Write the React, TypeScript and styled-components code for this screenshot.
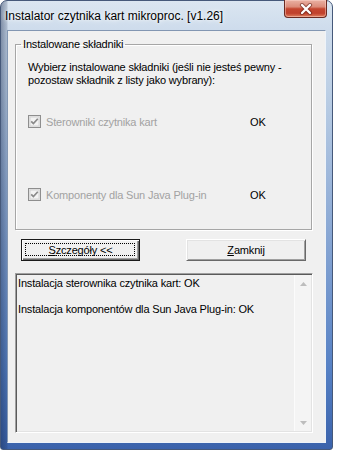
import React from "react";
import styled, { createGlobalStyle } from "styled-components";

const Global = createGlobalStyle`
  html, body { margin: 0; padding: 0; background: #ffffff; }
  body { font-family: "Liberation Sans", Arial, sans-serif; }
  * { box-sizing: border-box; }
`;

const Window = styled.div`
  width: 333px;
  height: 450px;
  display: flex;
  flex-direction: column;
  border: 1px solid #46597a;
  border-radius: 7px 7px 3px 3px;
  background:
    linear-gradient(90deg, rgba(20, 38, 75, 0.42) 0px, rgba(20, 38, 75, 0.18) 6px, rgba(0, 0, 0, 0) 7px),
    linear-gradient(180deg, #dbe6f1 0px, #cedcec 28px, #bccfe5 90px, #8aa8d4 230px, #5580c4 370px, #3a62ab 449px);
`;

const TitleBar = styled.div`
  height: 29px;
  display: flex;
  align-items: center;
  justify-content: space-between;
  padding-left: 4px;
  padding-right: 5px;
`;

const Title = styled.span`
  font-size: 12px;
  color: #000;
  white-space: nowrap;
  text-shadow: 0 0 6px rgba(255, 255, 255, 0.95), 0 0 3px rgba(255, 255, 255, 0.9);
`;

const CloseButton = styled.div`
  align-self: flex-start;
  width: 43px;
  height: 18px;
  margin-top: -1px;
  border: 1px solid #6a2a22;
  border-top: none;
  border-radius: 0 0 4px 4px;
  background: linear-gradient(180deg, #eab1a3 0%, #dc8c7a 40%, #c4462f 52%, #c0412d 78%, #e0805f 100%);
  box-shadow: inset 0 0 0 1px rgba(255, 220, 210, 0.45);
  display: flex;
  align-items: center;
  justify-content: center;
`;

const Client = styled.div`
  flex: 1;
  margin: 0 6px 6px 6px;
  border: 1px solid;
  border-color: #8296b2 #eef3f9 #eef3f9 #8296b2;
  background: #f0f0f0;
  display: flex;
  flex-direction: column;
  align-items: flex-start;
  font-size: 11px;
  letter-spacing: -0.17px;
  color: #000;
`;

const Group = styled.fieldset`
  margin: 7px 0 0 7px;
  padding: 0;
  width: 297px;
  height: 192px;
  min-width: 0;
  border: 1px solid #a6a6a6;
  box-shadow: inset 1px 1px 0 #ffffff, 1px 1px 0 #ffffff;
`;

const Legend = styled.legend`
  margin-left: 5px;
  padding: 0 2px;
  line-height: 13px;
  font-size: 11px;
`;

const GroupBody = styled.div`
  padding: 10px 0 0 12px;
`;

const Intro = styled.div`
  line-height: 13px;
`;

const Row = styled.div<{ $top: number }>`
  display: flex;
  align-items: center;
  height: 13px;
  margin-top: ${(p) => p.$top}px;
`;

const Label = styled.span`
  width: 209px;
  padding-left: 5px;
  color: #a2a2a2;
  white-space: nowrap;
`;

const Status = styled.span`
  color: #000;
`;

const ButtonRow = styled.div`
  display: flex;
  gap: 46px;
  margin: 9px 0 0 13px;
`;

const Button = styled.div<{ $default?: boolean }>`
  width: ${(p) => (p.$default ? 119 : 120)}px;
  height: 22px;
  display: flex;
  align-items: center;
  justify-content: center;
  position: relative;
  background: #f0f0f0;
  border: 1px solid;
  border-color: ${(p) => (p.$default ? "#1a1a1a" : "#ffffff #696969 #696969 #ffffff")};
  box-shadow: ${(p) =>
    p.$default
      ? "inset 1px 1px 0 #ffffff, inset -1px -1px 0 #696969, inset -2px -2px 0 #a0a0a0"
      : "inset 1px 1px 0 #e3e3e3, inset -1px -1px 0 #a0a0a0"};
  white-space: nowrap;
  u { text-decoration: underline; text-underline-offset: 1px; }
`;

const FocusRect = styled.span`
  position: absolute;
  inset: 3px 4px 4px 3px;
  border: 1px dotted #000;
  pointer-events: none;
`;

const LogBox = styled.div`
  margin: 12px 0 0 7px;
  width: 298px;
  height: 160px;
  display: flex;
  border: 1px solid;
  border-color: #a0a0a0 #ffffff #ffffff #a0a0a0;
  box-shadow: inset 1px 1px 0 #5a5a5a, inset -1px -1px 0 #e3e3e3;
  background: #f0f0f0;
`;

const LogText = styled.div`
  flex: 1;
  padding: 3px 0 0 2px;
  line-height: 13px;
`;

const LogLine = styled.div`
  margin-bottom: 13px;
  white-space: nowrap;
`;

const ScrollBar = styled.div`
  width: 17px;
  margin: 1px 1px 1px 0;
  display: flex;
  flex-direction: column;
  justify-content: space-between;
  background: #f4f4f4;
  border-left: 1px solid #fbfbfb;
`;

const ScrollArrow = styled.div`
  height: 17px;
  display: flex;
  align-items: center;
  justify-content: center;
`;

const Checkbox = () => (
  <svg width="13" height="13" viewBox="0 0 13 13">
    <rect x="0.5" y="0.5" width="12" height="12" fill="#e6e6e6" stroke="#8e8e8e" />
    <rect x="2" y="2" width="9" height="9" fill="#f3f3f3" stroke="#d4d4d4" strokeWidth="1" />
    <path d="M3.2 6.3 L5.4 8.6 L9.8 3.8" fill="none" stroke="#8a8a8a" strokeWidth="1.7" />
  </svg>
);

const Arrow = ({ up }: { up?: boolean }) => (
  <svg width="7" height="4" viewBox="0 0 7 4">
    <path d={up ? "M0 4 L3.5 0 L7 4 Z" : "M0 0 L3.5 4 L7 0 Z"} fill="#bdbdbd" />
  </svg>
);

export default function App() {
  return (
    <>
      <Global />
      <Window>
        <TitleBar>
          <Title>Instalator czytnika kart mikroproc. [v1.26]</Title>
          <CloseButton>
            <svg width="14" height="12" viewBox="0 0 14 12">
              <path d="M3 2 L11 10 M11 2 L3 10" stroke="#5a1a12" strokeOpacity="0.55" strokeWidth="4.2" strokeLinecap="round" />
              <path d="M3 2 L11 10 M11 2 L3 10" stroke="#ffffff" strokeWidth="2.3" strokeLinecap="round" />
            </svg>
          </CloseButton>
        </TitleBar>
        <Client>
          <Group>
            <Legend>Instalowane składniki</Legend>
            <GroupBody>
              <Intro>
                Wybierz instalowane składniki (jeśli nie jesteś pewny -
                <br />
                pozostaw składnik z listy jako wybrany):
              </Intro>
              <Row $top={28}>
                <Checkbox />
                <Label>Sterowniki czytnika kart</Label>
                <Status>OK</Status>
              </Row>
              <Row $top={60}>
                <Checkbox />
                <Label>Komponenty dla Sun Java Plug-in</Label>
                <Status>OK</Status>
              </Row>
            </GroupBody>
          </Group>
          <ButtonRow>
            <Button $default>
              <FocusRect />
              <span>
                <u>S</u>zczegóły &lt;&lt;
              </span>
            </Button>
            <Button>
              <span>
                <u>Z</u>amknij
              </span>
            </Button>
          </ButtonRow>
          <LogBox>
            <LogText>
              <LogLine>Instalacja sterownika czytnika kart: OK</LogLine>
              <LogLine>Instalacja komponentów dla Sun Java Plug-in: OK</LogLine>
            </LogText>
            <ScrollBar>
              <ScrollArrow>
                <Arrow up />
              </ScrollArrow>
              <ScrollArrow>
                <Arrow />
              </ScrollArrow>
            </ScrollBar>
          </LogBox>
        </Client>
      </Window>
    </>
  );
}
